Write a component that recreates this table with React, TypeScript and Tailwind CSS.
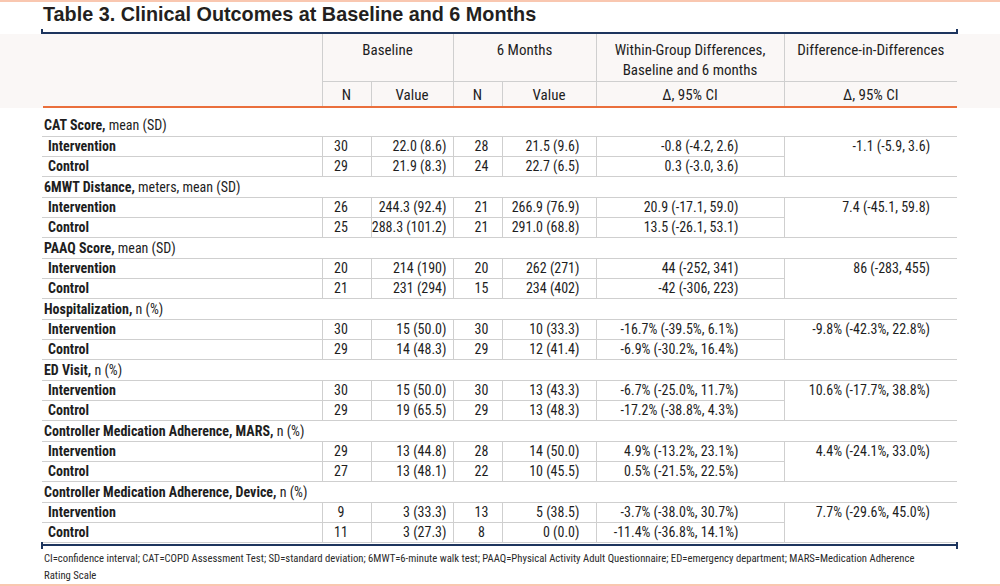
import React from "react";

type Row = {
  n1: string;
  v1: string;
  n2: string;
  v2: string;
  w: string;
};
type Group = {
  bold: string;
  rest: string;
  inter: Row;
  ctrl: Row;
  did: string;
};

const groups: Group[] = [
  {
    bold: "CAT Score,",
    rest: " mean (SD)",
    inter: { n1: "30", v1: "22.0 (8.6)", n2: "28", v2: "21.5 (9.6)", w: "-0.8 (-4.2, 2.6)" },
    ctrl: { n1: "29", v1: "21.9 (8.3)", n2: "24", v2: "22.7 (6.5)", w: "0.3 (-3.0, 3.6)" },
    did: "-1.1 (-5.9, 3.6)",
  },
  {
    bold: "6MWT Distance,",
    rest: " meters, mean (SD)",
    inter: { n1: "26", v1: "244.3 (92.4)", n2: "21", v2: "266.9 (76.9)", w: "20.9 (-17.1, 59.0)" },
    ctrl: { n1: "25", v1: "288.3 (101.2)", n2: "21", v2: "291.0 (68.8)", w: "13.5 (-26.1, 53.1)" },
    did: "7.4 (-45.1, 59.8)",
  },
  {
    bold: "PAAQ Score,",
    rest: " mean (SD)",
    inter: { n1: "20", v1: "214 (190)", n2: "20", v2: "262 (271)", w: "44 (-252, 341)" },
    ctrl: { n1: "21", v1: "231 (294)", n2: "15", v2: "234 (402)", w: "-42 (-306, 223)" },
    did: "86 (-283, 455)",
  },
  {
    bold: "Hospitalization,",
    rest: " n (%)",
    inter: { n1: "30", v1: "15 (50.0)", n2: "30", v2: "10 (33.3)", w: "-16.7% (-39.5%, 6.1%)" },
    ctrl: { n1: "29", v1: "14 (48.3)", n2: "29", v2: "12 (41.4)", w: "-6.9% (-30.2%, 16.4%)" },
    did: "-9.8% (-42.3%, 22.8%)",
  },
  {
    bold: "ED Visit,",
    rest: " n (%)",
    inter: { n1: "30", v1: "15 (50.0)", n2: "30", v2: "13 (43.3)", w: "-6.7% (-25.0%, 11.7%)" },
    ctrl: { n1: "29", v1: "19 (65.5)", n2: "29", v2: "13 (48.3)", w: "-17.2% (-38.8%, 4.3%)" },
    did: "10.6% (-17.7%, 38.8%)",
  },
  {
    bold: "Controller Medication Adherence, MARS,",
    rest: " n (%)",
    inter: { n1: "29", v1: "13 (44.8)", n2: "28", v2: "14 (50.0)", w: "4.9% (-13.2%, 23.1%)" },
    ctrl: { n1: "27", v1: "13 (48.1)", n2: "22", v2: "10 (45.5)", w: "0.5% (-21.5%, 22.5%)" },
    did: "4.4% (-24.1%, 33.0%)",
  },
  {
    bold: "Controller Medication Adherence, Device,",
    rest: " n (%)",
    inter: { n1: "9", v1: "3 (33.3)", n2: "13", v2: "5 (38.5)", w: "-3.7% (-38.0%, 30.7%)" },
    ctrl: { n1: "11", v1: "3 (27.3)", n2: "8", v2: "0 (0.0)", w: "-11.4% (-36.8%, 14.1%)" },
    did: "7.7% (-29.6%, 45.0%)",
  },
];

function Cols() {
  return (
    <colgroup>
      <col className="w-[280px]" />
      <col className="w-[49px]" />
      <col className="w-[82px]" />
      <col className="w-[49px]" />
      <col className="w-[94px]" />
      <col className="w-[188px]" />
      <col className="w-[173px]" />
    </colgroup>
  );
}

function Rule() {
  return (
    <div className="ml-[41px] flex h-[7px] w-[917px] items-center">
      <div className="h-[7px] w-[2px] bg-[#1d355e]" />
      <div className="h-[2px] flex-1 bg-[#1d355e]" />
      <div className="h-[7px] w-[2px] bg-[#1d355e]" />
    </div>
  );
}

const cellB = "border-l border-t border-b border-[#cfcfcf]";

function DataRow({ label, r, did }: { label: string; r: Row; did?: string }) {
  return (
    <tr className="h-[20px] leading-[19px]">
      <td className="border-t border-b border-[#cfcfcf] p-0 pl-[6px] font-bold">{label}</td>
      <td className={`${cellB} p-0 pr-[11px] text-center`}>{r.n1}</td>
      <td className={`${cellB} p-0 pr-[6px] text-right`}>{r.v1}</td>
      <td className={`${cellB} p-0 pl-[8px] text-center`}>{r.n2}</td>
      <td className={`${cellB} p-0 pr-[16px] text-right`}>{r.v2}</td>
      <td className={`${cellB} p-0 pr-[45px] text-right`}>{r.w}</td>
      {did !== undefined && (
        <td rowSpan={2} className={`${cellB} p-0 pr-[27px] text-right align-top`}>
          {did}
        </td>
      )}
    </tr>
  );
}

export default function App() {
  return (
    <div className="flex h-[586px] w-[1000px] flex-col overflow-hidden bg-white font-['Roboto_Condensed','Roboto',sans-serif] text-[#1e1e1e]">
      <div className="h-[2px] shrink-0 bg-[#f9c7b0]" />
      <div className="shrink-0 pl-[43px] font-['Liberation_Sans',Arial,sans-serif] text-[19.8px] font-bold leading-[24px] text-[#231f20]">
        Table 3. Clinical Outcomes at Baseline and 6 Months
      </div>
      <div className="mt-[3px] -mb-[2px] shrink-0">
        <Rule />
      </div>
      <div className="shrink-0 bg-[#faf7f6]">
        <table className="ml-[42px] w-[915px] table-fixed border-collapse text-[15px] font-normal">
          <Cols />
          <thead>
            <tr className="h-[47px] leading-[20px]">
              <th rowSpan={2} className="p-0" />
              <th colSpan={2} className="border-l border-b border-[#cfcfcf] p-0 pt-[6px] align-top font-normal">
                Baseline
              </th>
              <th colSpan={2} className="border-l border-b border-[#cfcfcf] p-0 pt-[6px] align-top font-normal">
                6 Months
              </th>
              <th className="border-l border-b border-[#cfcfcf] p-0 pt-[6px] align-top font-normal">
                Within-Group Differences,
                <br />
                Baseline and 6 months
              </th>
              <th className="border-l border-b border-[#cfcfcf] p-0 pt-[6px] align-top font-normal">
                Difference-in-Differences
              </th>
            </tr>
            <tr className="h-[25px] leading-[20px]">
              <th className="border-l border-[#cfcfcf] p-0 pt-[3px] font-normal">N</th>
              <th className="border-l border-[#cfcfcf] p-0 pt-[3px] font-normal">Value</th>
              <th className="border-l border-[#cfcfcf] p-0 pt-[3px] font-normal">N</th>
              <th className="border-l border-[#cfcfcf] p-0 pt-[3px] font-normal">Value</th>
              <th className="border-l border-[#cfcfcf] p-0 pt-[3px] font-normal">Δ, 95% CI</th>
              <th className="border-l border-[#cfcfcf] p-0 pt-[3px] font-normal">Δ, 95% CI</th>
            </tr>
          </thead>
        </table>
        <div className="ml-[43px] h-[2px] w-[914px] bg-[#ea6f3c]" />
      </div>
      <div className="h-[7px] shrink-0" />
      <table className="ml-[42px] w-[915px] shrink-0 table-fixed border-collapse text-[14px]">
        <Cols />
        <tbody>
          {groups.map((g) => (
            <React.Fragment key={g.bold}>
              <tr className="h-[21px] leading-[20px]">
                <td colSpan={7} className="p-0 pl-[2px]">
                  <span className="font-bold">{g.bold}</span>
                  {g.rest}
                </td>
              </tr>
              <DataRow label="Intervention" r={g.inter} did={g.did} />
              <DataRow label="Control" r={g.ctrl} />
            </React.Fragment>
          ))}
        </tbody>
      </table>
      <div className="-mt-[1px] shrink-0">
        <Rule />
      </div>
      <div className="flex-1 pl-[44px] pt-[1px] text-[10.7px] leading-[17px] text-[#2a2a2a]">
        CI=confidence interval; CAT=COPD Assessment Test; SD=standard deviation; 6MWT=6-minute walk test; PAAQ=Physical
        Activity Adult Questionnaire; ED=emergency department; MARS=Medication Adherence
        <br />
        Rating Scale
      </div>
      <div className="h-[2px] shrink-0 bg-[#f9c7b0]" />
    </div>
  );
}
